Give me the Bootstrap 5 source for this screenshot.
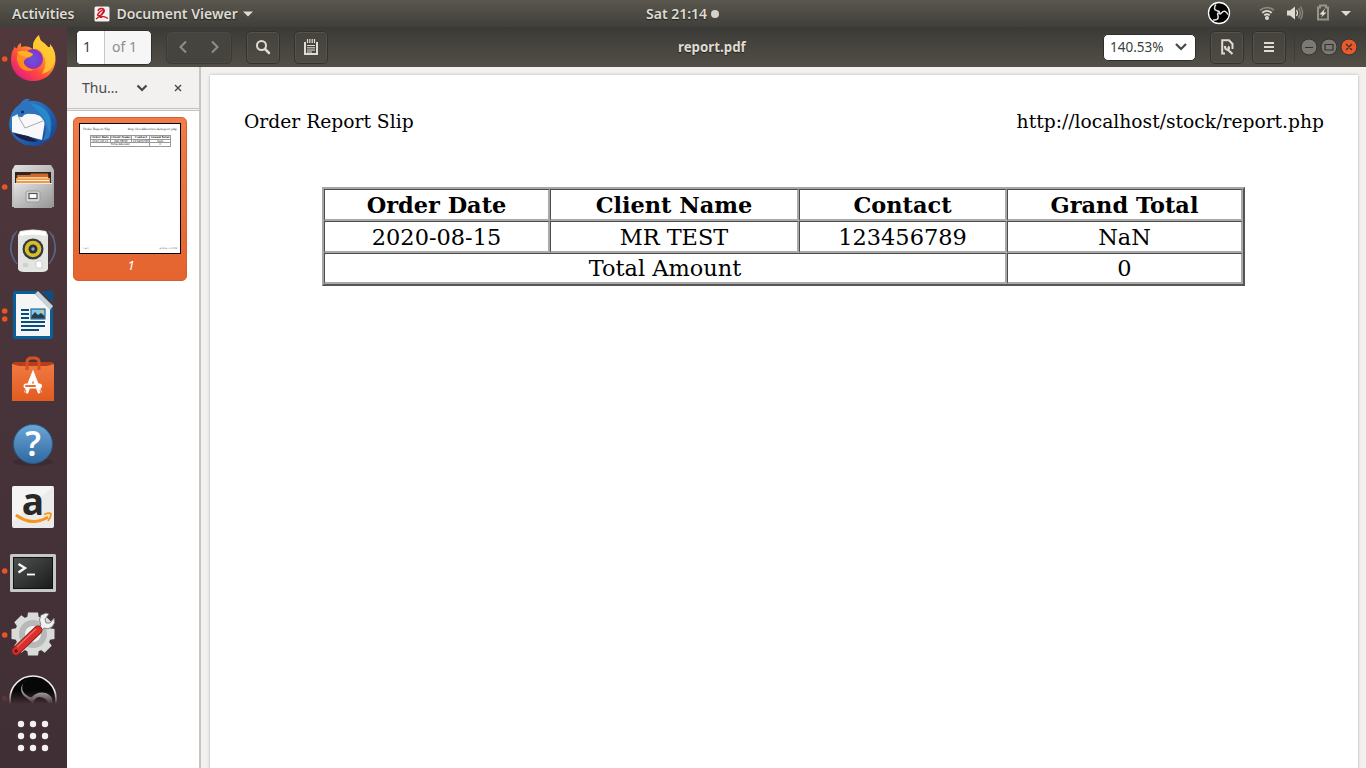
<!DOCTYPE html>
<html lang="en">
<head>
<meta charset="utf-8">
<meta name="viewport" content="width=device-width, initial-scale=1">
<title>report.pdf</title>
<link href="https://cdn.jsdelivr.net/npm/bootstrap@5.3.0/dist/css/bootstrap.min.css" rel="stylesheet">
<style>
body{font-family:"Noto Sans","Open Sans",sans-serif;font-size:14px;line-height:20px;height:768px;overflow:hidden;background:#f2f1f0}
svg{display:block;flex:none}
.panel{height:27px;background:linear-gradient(#5a574e,#403f3a);color:#dfdbd2;font-weight:600;display:grid;grid-template-columns:1fr 78px 1fr}
.panel span,.headerbar .title{text-shadow:0 1px 1px #222}
.dock{width:67px;background:linear-gradient(#51383c,#47333a 50%,#412f36)}
.dock-item{height:64px;flex:none}
.dock-clip{height:37px;overflow:hidden;flex:none}
.headerbar{height:40px;background:linear-gradient(#3b3a36,#514f46);color:#dfdbd2;padding-left:9px}
.headerbar .title{font-weight:700;width:76px;margin-left:350px;font-size:13.3px;white-space:nowrap}
.entry{width:76px;height:35px;border:1px solid #33312d;border-radius:5px;background:#f7f6f6;overflow:hidden}
.entry .num{width:28px;background:#fff;color:#3c3c3c;padding-left:6px;border-right:1px solid #c8c8c8}
.entry .of{color:#8d8d8d;padding-left:7px}
.tool{height:33px;width:34px;border:1px solid #34322e;border-radius:5px;background:linear-gradient(#45433d,#4d4b43);box-shadow:inset 0 0 0 1px #54524a}
.tool.nav-pair{width:66px;background:#46443e;border-color:#3c3a36;box-shadow:inset 0 0 0 1px #4b4942}
.zoombox{width:93px;height:27px;border:1px solid #2f2e2a;border-radius:5px;background:#fff;color:#3c3c3c;padding-left:6px}
.side{width:134px;background:#fff;border-right:2px solid #c8c5c1}
.side-head{height:44px;background:#f2f1f0;border-bottom:3px double #c5c2be;color:#4c4c4c;padding-left:15px}
.thumb-card{width:114px;height:164px;margin:6px 0 0 6px;border:1px solid #d5602f;border-radius:5px;background:linear-gradient(#f17b4a,#e76a37 70%,#e5642f);padding:5px 0 0 5px;color:#fff}
.thumb{width:102px;height:131px;border:1px solid #000;background:#fff;color:#222;font:3px/4px "DejaVu Serif",serif;padding:3px}
.thumb table{width:81px;margin:4px 0 0 7px;border-collapse:collapse;text-align:center}
.thumb td{border:.5px solid #999;padding:0;line-height:2.6px;font-size:2.8px;height:3px}
.viewer{padding:8px 8px 0 9px;background:#f2f1f0}
.sheet{height:700px;background:#fff;box-shadow:0 0 3px #b5b3b0;font-family:"DejaVu Serif",serif;color:#000}
.sheet-head{font-size:18.7px;line-height:24px;padding:35px 34px 0 34px}
.report{width:923px;margin:53px 0 0 112px;table-layout:fixed;border-collapse:separate;border-spacing:0;border:2px solid;border-color:#a6a6a6 #555 #555 #a6a6a6;font-size:22.45px;line-height:28px;text-align:center}
.report th,.report td{height:32px;padding:0;text-align:center;border:solid;border-width:1px 2px 2px 1px;border-color:#4c4c4c #aaa #aaa #4c4c4c}
.report tr:last-child td{height:31px}
</style>
</head>
<body class="d-flex flex-column">
<header class="panel align-items-center">
  <div class="d-flex align-items-center">
    <span style="margin-left:12px" id="act">Activities</span>
    <svg style="margin-left:20px" width="16" height="16"><rect x=".5" y=".5" width="15" height="15" rx="1.5" fill="#f4f2f2"/><path d="M4 5C5 1 12 2 10 6S2 11 4 8 12 1 9 6 5 12 8 11M2 13Q7 8 14 12.5" fill="none" stroke="#cf1722" stroke-width="1.4"/></svg>
    <span style="margin-left:6px" id="dv">Document Viewer</span>
    <svg style="margin-left:5px" width="10" height="6"><path d="M0 .5h10L5 5.5z" fill="#dfdbd2"/></svg>
  </div>
  <div class="d-flex align-items-center text-nowrap" style="margin-left:2px"><span id="clock">Sat 21:14</span><svg style="margin-left:4px" width="8" height="8"><circle cx="4" cy="4" r="4" fill="#d5d2ca"/></svg></div>
  <svg class="ms-auto" width="166" height="27">
    <g transform="translate(19 13)"><circle r="10.5" fill="#000" stroke="#fff" stroke-width="1.3"/><g id="fan" fill="none" stroke="#e2e2e2" stroke-width="1.5"><path id="bl" d="M0 0C2-3-4-1-4.500-4.500Q-4.500-7-3-8.500"/><use href="#bl" transform="rotate(120)"/><use href="#bl" transform="rotate(240)"/></g></g>
    <g fill="none" stroke-width="1.8"><path d="M60 10.200Q67 5 74 10.200" stroke="#8a877f"/><path d="M62.200 12.800Q67 9 71.800 12.800M64.200 15.300Q67 13.200 69.800 15.300" stroke="#dfdbd2"/></g><circle cx="67" cy="18" r="2" fill="#dfdbd2"/>
    <path d="M87 10.500h3l5-4v13l-5-4h-3z" fill="#dfdbd2"/><path d="M96.500 10q2 3 0 6" fill="none" stroke="#dfdbd2" stroke-width="1.3"/><path d="M98.500 8q3.500 5 0 10M100.500 6.500q4 6.500 0 13" fill="none" stroke="#8a877f" stroke-width="1.4"/>
    <path d="M118 7.500h2v-2h6v2h2v12h-10z" fill="none" stroke="#96938a" stroke-width="2"/><path d="M125 8.500l-5.500 6h3l-1.500 3 5.500-5h-3z" fill="#e8e4dc"/>
    <path d="M141 11h10l-5 5z" fill="#dfdbd2"/>
  </svg>
</header>
<div class="d-flex flex-grow-1">
<nav class="dock d-flex flex-column">
  <svg class="dock-item" width="67" height="64"><defs>
    <linearGradient id="ff" x1="1" y1="0" x2=".2" y2="1"><stop stop-color="#fff04a"/><stop offset=".4" stop-color="#ff9a28"/><stop offset=".7" stop-color="#ff4a3a"/><stop offset="1" stop-color="#e3158b"/></linearGradient>
    <radialGradient id="ffp"><stop stop-color="#6158e0"/><stop offset="1" stop-color="#8a30c4"/></radialGradient></defs>
    <circle cx="4.700" cy="32" r="2.800" fill="#e95420"/>
    <path d="M12 25L15 19Q15 22 17 21Q18 17 21 16V20Q28 18 33 22Q32 14 39 8Q39 13 44 16L48 20Q51 21 50 17Q56 24 55.500 33C55 46 45 54 33 54C20 54 11 44 11 33Q11 29 12 25Z" fill="url(#ff)"/>
    <path d="M33 22Q32 14 39 8Q39 13 44 16L48 20Q51 21 50 17Q56 24 55 34Q52 45 42 47Q49 35 42 26Q39 21 33 22Z" fill="#ffcf32" opacity=".8"/>
    <circle cx="33" cy="32" r="10" fill="url(#ffp)"/>
    <path d="M18 26Q23 22 29 25L33 27Q32 30 27 31Q23 33 24 37Q28 43 35 42Q27 47 20 40Q15 33 18 26Z" fill="#ff8c20"/><path d="M17 25Q23 23 29 25L33 27Q31 30 26 30Q20 29 17 25Z" fill="#ffb02b"/>
  </svg>
  <svg class="dock-item" width="67" height="64"><defs><linearGradient id="tb" x1="0" y1="0" x2="1" y2="1"><stop stop-color="#3284d2"/><stop offset=".5" stop-color="#2366b7"/><stop offset="1" stop-color="#143b89"/></linearGradient></defs>
    <path d="M20 13Q24 7 30 8L28 10Q40 8 49 17Q56 24 57 32L55 42L52 46L49 50L44 51L42 54L36 55L25 54Q10 47 9 33Q10 20 20 13Z" fill="url(#tb)"/>
    <path d="M12 26L20 22L46 24L42 49L12 41Z" fill="#f8f8fa"/><path d="M13 42L28 45L38 50Q24 53 13 42Z" fill="#1c2045"/>
    <path d="M18 25L25 37L43 30" fill="none" stroke="#aaa" stroke-width="1"/>
    <path d="M18 25Q15 15 24 11Q36 9 47 20Q55 32 49 47L43 50Q49 33 40 25Q31 20 24 24Q22 28 18 25Z" fill="#2d73bd"/><path d="M29 12Q43 13 49 24Q52 33 49 42Q46 24 29 12" fill="#2793d0" opacity=".7"/><circle cx="22.500" cy="21" r="1.500" fill="#142f55"/>
  </svg>
  <svg class="dock-item" width="67" height="64"><defs><linearGradient id="fi" x1="0" y1="0" x2="1" y2="1"><stop stop-color="#e1e1e1"/><stop offset="1" stop-color="#969696"/></linearGradient></defs>
    <circle cx="4.700" cy="32" r="2.800" fill="#e95420"/><path d="M15 10H51L54 15V52H12V15Z" fill="url(#fi)"/><path d="M15 17H51V28H15Z" fill="#2b2420"/><path d="M17 20H30L31 18.500H48L49 28H16Z" fill="#cf6a28"/><path d="M16 23H50V28H16Z" fill="#ee9a45"/><path d="M18 22.800H48M17 25.500H49" stroke="#fff0d8"/><path d="M14 28H52V53H14Z" fill="url(#fi)"/><path d="M14 28.500H52" stroke="#e8e8e8"/><rect x="26" y="36" width="14" height="11" rx="2" fill="#d7d7d7" stroke="#9b9b9b"/><rect x="29" y="38.500" width="8" height="5" fill="#fff" stroke="#555" stroke-width="1.200"/>
  </svg>
  <svg class="dock-item" width="67" height="64"><g fill="none" stroke="#587dac" opacity=".7"><path d="M17 12Q4 30 17 45M15 14Q7 30 15 42M13 16Q9 29 13 38M49 12Q62 30 49 45M51 14Q59 30 51 42M53 16Q57 29 53 38" stroke-width="1.200"/></g><path d="M20 12Q33 9 46 12L48 16V50Q47 53 42 53H24Q19 53 18 50V16Z" fill="#e4e5e3"/><path d="M20 13Q33 10 46 13V17Q33 14 20 17Z" fill="#fff"/><circle cx="33" cy="30" r="10.500" fill="#343b40"/><circle cx="33" cy="30" r="8.300" fill="#d9bd26"/><circle cx="33" cy="30" r="4.500" fill="#283442"/><circle cx="33" cy="30" r="1.700" fill="#91a3b4"/><rect x="23" y="44" width="5" height="4" rx="1" fill="#d0d0ce"/><rect x="36" y="42" width="6" height="7" rx="2" fill="#fff" stroke="#bbb" stroke-width=".6"/></svg>
  <svg class="dock-item" width="67" height="64"><circle cx="4.700" cy="28" r="2.800" fill="#e95420"/><circle cx="4.700" cy="36" r="2.800" fill="#e95420"/><path d="M15 8H37L53 24V54Q53 56 51 56H15Q13 56 13 54V10Q13 8 15 8Z" fill="#08609a"/><path d="M41 8H53V20Z" fill="#0a5084"/><path d="M16 11H35L50 26V53H16Z" fill="#f5f5f5"/><path d="M35 11L38 8L53 23L50 27Z" fill="#c9d1d7"/><g stroke="#084d7c" stroke-width="1.800"><path d="M21 27H29M21 31H29M21 35H29M21 39H45M21 43H45M21 47H39"/></g><rect x="31" y="26" width="14" height="10" fill="#86c8ed" stroke="#07558a"/><circle cx="42" cy="28.500" r="1.500" fill="#ebc449"/><path d="M31.500 35.500V33L35 29L38 32L41 30L44.500 33V35.500Z" fill="#243f50"/></svg>
  <svg class="dock-item" width="67" height="64"><defs><linearGradient id="so" x2="0" y2="1"><stop stop-color="#ef7a42"/><stop offset="1" stop-color="#e25b20"/></linearGradient></defs><path d="M12 17L14 15H52L54 17V21H12Z" fill="#b83d18"/><path d="M12 17L19 19H47L54 17V54H12Z" fill="url(#so)"/><path d="M27 23V15Q27 11 32 11H34Q39 11 39 15V23" fill="none" stroke="#d45127" stroke-width="3"/><path d="M26 46L33 28L40 46" fill="none" stroke="#fff" stroke-width="4"/><rect x="23.500" y="36.500" width="18.500" height="5" rx="2.500" fill="#fff"/><rect x="25" y="38" width="11" height="2" rx="1" fill="#e86b34"/><path d="M26 43L25 47M40 43L41 47" stroke="#e86b34" stroke-width="1"/></svg>
  <svg class="dock-item" width="67" height="64"><defs><linearGradient id="he" x2="0" y2="1"><stop stop-color="#6aa6d8"/><stop offset="1" stop-color="#30689f"/></linearGradient></defs><ellipse cx="33" cy="51" rx="20" ry="4" fill="#2d2026" opacity=".4"/><circle cx="33" cy="33" r="19.500" fill="url(#he)" stroke="#285b8b"/><text x="33" y="45" text-anchor="middle" font-family="Noto Sans" font-weight="600" font-size="34" fill="#fff">?</text></svg>
  <svg class="dock-item" width="67" height="64"><rect x="12" y="11" width="42" height="42" rx="2" fill="#ebebeb"/><path d="M12 13Q12 11 14 11H54L12 47Z" fill="#fff" opacity=".45"/><text x="33" y="40" text-anchor="middle" font-family="Open Sans" font-weight="700" font-size="37" fill="#282828">a</text><path d="M16 40Q32 52 48 42" fill="none" stroke="#f79518" stroke-width="3"/><path d="M44 39.500Q50 37 51 39Q51 42 48 46" fill="none" stroke="#f79518" stroke-width="1.800"/></svg>
  <svg class="dock-item" width="67" height="64"><defs><linearGradient id="te" x1="0" y1="0" x2="1" y2="1"><stop stop-color="#505252"/><stop offset="1" stop-color="#191a1a"/></linearGradient></defs><circle cx="4.700" cy="32" r="2.800" fill="#e95420"/><rect x="10" y="15" width="46" height="38" rx="1.500" fill="#c5c8c4"/><rect x="13.500" y="18.500" width="39" height="31" fill="url(#te)" stroke="#111"/><path d="M18.500 25L25 29L18.500 33.500" fill="none" stroke="#f5f5f5" stroke-width="2.400"/><path d="M27 35.500H35" stroke="#fff" stroke-width="1.800"/></svg>
  <svg class="dock-item" width="67" height="64"><circle cx="4.700" cy="32" r="2.800" fill="#e95420"/><g transform="translate(33 31)"><g fill="#d9dbd9"><circle r="18"/><g id="teeth"><path d="M-5-21.500H5L6-15H-6ZM-5 21.500H5L6 15H-6Z"/><path d="M-5-21.500H5L6-15H-6ZM-5 21.500H5L6 15H-6Z" transform="rotate(45)"/><path d="M-5-21.500H5L6-15H-6ZM-5 21.500H5L6 15H-6Z" transform="rotate(90)"/><path d="M-5-21.500H5L6-15H-6ZM-5 21.500H5L6 15H-6Z" transform="rotate(135)"/></g></g><circle r="14" fill="#b6b9b8"/><circle r="8" fill="#f0f0ef"/></g><path d="M36 27L41 22Q38 17 41 12L46 10L49 11L45 16L46 20L50 20L54 15Q56 20 52 24Q48 27 44 25L39 30Z" fill="#f1f1f1" stroke="#686b6b" stroke-width=".8"/><path d="M38 27L16 48" stroke="#911e1d" stroke-width="9" stroke-linecap="round"/><path d="M38 27L16 48" stroke="#d9302c" stroke-width="7" stroke-linecap="round"/><path d="M36 26L17 44" stroke="#f36b61" stroke-width="1.500"/><circle cx="16" cy="48" r="1.800" fill="#5b1b20"/></svg>
  <div class="dock-clip"><svg width="67" height="37"><defs><linearGradient id="fade" x2="0" y2="1"><stop offset=".65" stop-color="#42303700"/><stop offset="1" stop-color="#423037"/></linearGradient></defs><circle cx="4.700" cy="32" r="2.800" fill="#833d30"/><circle cx="33" cy="32" r="23" fill="#070707" stroke="#eee" stroke-width="1.700"/><path d="M27 12Q19 19 24 26Q29 31 32 30Q37 24 46 26Q52 28 53 36L49 37Q46 30 39 30Q34 31 33 37Q30 33 24 29Q17 21 27 12Z" fill="#aaa6a8"/><rect width="67" height="37" fill="url(#fade)"/></svg></div>
  <svg class="dock-item" width="67" height="64" fill="#f3f1f1"><g id="r3"><circle cx="21" cy="20" r="3.200"/><circle cx="33" cy="20" r="3.200"/><circle cx="45" cy="20" r="3.200"/></g><use href="#r3" y="12"/><use href="#r3" y="24"/></svg>
</nav>
<div class="flex-grow-1 d-flex flex-column">
  <div class="headerbar d-flex align-items-center">
    <div class="entry d-flex"><div class="num d-flex align-items-center">1</div><div class="of d-flex align-items-center">of 1</div></div>
    <div class="tool nav-pair d-flex align-items-center justify-content-around" style="margin-left:14px"><svg width="10" height="14"><path d="M8 1.500L2.500 7L8 12.500" fill="none" stroke="#918e86" stroke-width="2"/></svg><svg width="10" height="14"><path d="M2 1.500L7.500 7L2 12.500" fill="none" stroke="#918e86" stroke-width="2"/></svg></div>
    <div class="tool d-flex align-items-center justify-content-center" style="margin-left:14px"><svg width="16" height="16"><circle cx="6.500" cy="6.500" r="4.500" fill="none" stroke="#dfdbd2" stroke-width="2"/><path d="M10 10L14 14" stroke="#dfdbd2" stroke-width="2.500" stroke-linecap="round"/></svg></div>
    <div class="tool d-flex align-items-center justify-content-center" style="margin-left:14px"><svg width="14" height="16"><path d="M1 3V15H13V3" fill="none" stroke="#dfdbd2" stroke-width="2"/><path d="M3.500 0V4M5.800 0V4M8.200 0V4M10.500 0V4" stroke="#dfdbd2" stroke-width="1.200"/><path d="M3 6.500H11M3 8.800H11M3 11H11M3 13H8" stroke="#dfdbd2"/></svg></div>
    <div class="title" id="title">report.pdf</div>
    <div class="zoombox d-flex align-items-center" style="margin-left:349px"><span style="width:64px;font-size:13.5px">140.53%</span><svg width="14" height="10"><path d="M2 2L7 7L12 2" fill="none" stroke="#464646" stroke-width="2.200"/></svg></div>
    <div class="tool d-flex align-items-center justify-content-center" style="margin-left:14px"><svg width="13" height="16"><path d="M4 14.500H1.200V1.200H8L11.500 5V10" fill="none" stroke="#dfdbd2" stroke-width="2"/><path d="M4 7Q4 11 6.500 10.500L11.500 15M7 7.500Q9 9 7 11" fill="none" stroke="#dfdbd2" stroke-width="2.200"/></svg></div>
    <div class="tool d-flex align-items-center justify-content-center" style="margin-left:8px"><svg width="10" height="10"><path d="M0 1H10M0 5H10M0 9H10" stroke="#dfdbd2" stroke-width="1.800"/></svg></div>
    <svg style="margin-left:7px" width="72" height="32"><path d="M1.500 2V30" stroke="#3e3c37"/><g stroke="#35332f"><circle cx="16" cy="16" r="8" fill="#7b7972"/><circle cx="36" cy="16" r="8" fill="#7b7972"/><circle cx="56" cy="16" r="8" fill="#e9592b"/></g><g fill="none" stroke="#35332f" stroke-width="1.200"><path d="M12 16.500H20M32 13.500H40V19H32ZM53 13L59 19M59 13L53 19"/></g></svg>
  </div>
  <div class="d-flex flex-grow-1">
    <aside class="side">
      <div class="side-head d-flex align-items-center"><span style="width:53px" id="thu">Thu…</span><svg width="14" height="10"><path d="M2.500 2.500L7 7L11.500 2.500" fill="none" stroke="#464646" stroke-width="2.200"/></svg><svg style="margin-left:25px" width="8" height="8"><path d="M1 1L7 7M7 1L1 7" stroke="#484848" stroke-width="1.400"/></svg></div>
      <div class="thumb-card">
        <div class="thumb d-flex flex-column"><div class="d-flex justify-content-between"><span>Order Report Slip</span><span>http://localhost/stock/report.php</span></div>
          <table><tr><td><b>Order Date</b></td><td><b>Client Name</b></td><td><b>Contact</b></td><td><b>Grand Total</b></td></tr><tr><td>2020-08-15</td><td>MR TEST</td><td>123456789</td><td>NaN</td></tr><tr><td colspan="3">Total Amount</td><td>0</td></tr></table>
          <div class="d-flex justify-content-between mt-auto" style="font-size:2px"><span>1 of 1</span><span>8/15/20, 9:14 PM</span></div></div>
        <div class="fst-italic text-center" style="width:104px;margin-top:1px;font-size:13px">1</div>
      </div>
    </aside>
    <main class="viewer flex-grow-1"><div class="sheet">
      <div class="sheet-head d-flex justify-content-between"><span>Order Report Slip</span><span>http://localhost/stock/report.php</span></div>
      <table class="report"><colgroup><col style="width:226px"><col style="width:249px"><col style="width:208px"><col style="width:236px"></colgroup>
        <tr><th>Order Date</th><th>Client Name</th><th>Contact</th><th>Grand Total</th></tr>
        <tr><td>2020-08-15</td><td>MR TEST</td><td>123456789</td><td>NaN</td></tr>
        <tr><td colspan="3">Total Amount</td><td>0</td></tr></table>
    </div></main>
  </div>
</div>
</div>
<script src="https://cdn.jsdelivr.net/npm/bootstrap@5.3.0/dist/js/bootstrap.bundle.min.js"></script>
</body>
</html>
